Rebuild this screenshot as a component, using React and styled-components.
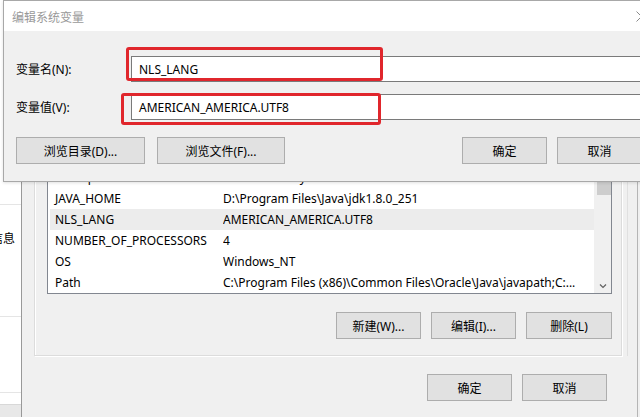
import React from 'react';
import styled, { createGlobalStyle } from 'styled-components';

const GlobalStyle = createGlobalStyle`
  html, body {
    margin: 0;
    padding: 0;
    overflow: hidden;
  }
  body {
    font-family: "Noto Sans", "Noto Sans CJK SC", sans-serif;
    font-size: 12px;
    color: #000;
  }
`;

const Desktop = styled.div`
  position: relative;
  width: 640px;
  height: 417px;
  overflow: hidden;
  background: #f0f0f0;
`;

/* window peeking in at the left edge */
const SideWindow = styled.div`
  position: absolute;
  left: 0;
  top: 0;
  width: 21px;
  height: 417px;
  background: #fff;
  display: flex;
  flex-direction: column;
  overflow: hidden;
`;

const SideBlock = styled.div`
  height: ${(p) => p.h}px;
  flex: none;
  box-sizing: border-box;
  padding-top: ${(p) => p.pt || 0}px;
  border-bottom: 1px solid ${(p) => p.line || '#e5e5e5'};
  background: ${(p) => p.bg || '#fff'};
`;

const SideText = styled.div`
  margin-left: -9px;
  line-height: 16px;
  white-space: nowrap;
  font-family: "Noto Sans CJK SC", sans-serif;
`;

/* environment variables window (behind) */
const EnvWindow = styled.div`
  position: absolute;
  left: 21px;
  top: 0;
  width: 617px;
  height: 417px;
  background: #f0f0f0;
  border-left: 1px solid #999;
  border-right: 1px solid #b5b5b5;
  display: flex;
  flex-direction: column;
  padding: 0 30px 0 12px;
  box-sizing: border-box;
`;

const GroupFrame = styled.div`
  margin-top: 100px;
  width: 594px;
  border-right: 1px solid #e0e0e0;
  box-sizing: border-box;
`;

const Group = styled.div`
  width: 588px;
  box-sizing: border-box;
  border: 1px solid #dcdcdc;
  box-shadow: inset 1px 1px 0 #fff, 1px 1px 0 #fff;
  padding: 65px 9px 16px 12px;
  display: flex;
  flex-direction: column;
`;

const List = styled.div`
  height: 128px;
  box-sizing: border-box;
  border: 1px solid #828790;
  background: #fff;
  display: flex;
  overflow: hidden;
`;

const Rows = styled.div`
  flex: 1;
  display: flex;
  flex-direction: column;
`;

const Row = styled.div`
  height: 21px;
  flex: none;
  margin-left: 2px;
  padding-left: 5px;
  display: flex;
  align-items: center;
  white-space: nowrap;
  background: ${(p) => (p.selected ? '#ececec' : 'transparent')};
`;

const NameCell = styled.span`
  width: 168px;
  flex: none;
`;

const ValueCell = styled.span`
  flex: 1;
  overflow: hidden;
`;

const ScrollBar = styled.div`
  width: 17px;
  flex: none;
  background: #f0f0f0;
  display: flex;
  flex-direction: column;
  align-items: center;
  padding: 13px 0 4px;
  box-sizing: border-box;
`;

const Thumb = styled.div`
  width: 14px;
  height: 15px;
  margin-left: 2px;
  background: #cdcdcd;
`;

const Spacer = styled.div`
  flex: 1;
`;

const ButtonRow = styled.div`
  display: flex;
  justify-content: flex-end;
  gap: ${(p) => p.gap || 10}px;
  margin-top: ${(p) => p.mt || 0}px;
`;

const Button = styled.button`
  width: ${(p) => p.w || 85}px;
  height: 27px;
  flex: none;
  box-sizing: border-box;
  background: #e1e1e1;
  border: 1px solid #adadad;
  border-radius: 0;
  font-family: "Noto Sans", "Noto Sans CJK SC", sans-serif;
  font-size: 12px;
  color: #000;
  padding: 0;
  display: flex;
  align-items: center;
  justify-content: center;
`;

/* edit dialog (front) */
const EditDialog = styled.div`
  position: absolute;
  left: 3px;
  top: 0;
  width: 662px;
  height: 182px;
  box-sizing: border-box;
  border: 1px solid #a8a8a8;
  background: #f0f0f0;
  display: flex;
  flex-direction: column;
  box-shadow: 0 1px 3px rgba(0, 0, 0, 0.12);
`;

const TitleBar = styled.div`
  height: 30px;
  flex: none;
  background: #fff;
  display: flex;
  align-items: center;
  justify-content: space-between;
  padding-left: 8px;
  color: #999;
  font-family: "Noto Sans CJK SC", sans-serif;
`;

const CloseBox = styled.div`
  width: 46px;
  height: 30px;
  display: flex;
  align-items: center;
  justify-content: center;
`;

const DialogBody = styled.div`
  flex: 1;
  padding: 25px 22px 0 12px;
  display: flex;
  flex-direction: column;
  gap: 12px;
`;

const FieldRow = styled.div`
  display: flex;
  align-items: center;
`;

const Label = styled.label`
  width: 115px;
  flex: none;
`;

const Input = styled.div`
  flex: 1;
  height: 26px;
  box-sizing: border-box;
  border: 1px solid #7a7a7a;
  background: #fff;
  display: flex;
  align-items: center;
  padding-left: 7px;
`;

const Highlight = styled.div`
  position: absolute;
  left: ${(p) => p.x}px;
  top: ${(p) => p.y}px;
  width: ${(p) => p.w}px;
  height: ${(p) => p.h}px;
  box-sizing: border-box;
  border: 3px solid #e0262c;
  border-radius: 3px;
  pointer-events: none;
`;

const rows = [
  ['ComSpec', 'C:\\Windows\\system32\\cmd.exe'],
  ['JAVA_HOME', 'D:\\Program Files\\Java\\jdk1.8.0_251'],
  ['NLS_LANG', 'AMERICAN_AMERICA.UTF8', true],
  ['NUMBER_OF_PROCESSORS', '4'],
  ['OS', 'Windows_NT'],
  ['Path', 'C:\\Program Files (x86)\\Common Files\\Oracle\\Java\\javapath;C:...'],
];

export default function App() {
  return (
    <Desktop>
      <GlobalStyle />
      <SideWindow>
        <SideBlock h={205} />
        <SideBlock h={112} pt={25}>
          <SideText>信息</SideText>
        </SideBlock>
        <SideBlock h={76} />
        <SideBlock h={12} line="#d8d8d8" />
        <SideBlock h={20} bg="#e8e8e8" />
      </SideWindow>

      <EnvWindow>
        <GroupFrame>
          <Group>
            <List>
              <Rows>
                {rows.map(([name, value, selected]) => (
                  <Row key={name} selected={selected}>
                    <NameCell>{name}</NameCell>
                    <ValueCell>{value}</ValueCell>
                  </Row>
                ))}
              </Rows>
              <ScrollBar>
                <Thumb />
                <Spacer />
                <svg width="8" height="6" viewBox="0 0 8 6">
                  <path d="M1 1.5 L4 4.5 L7 1.5" fill="none" stroke="#606060" strokeWidth="1.2" />
                </svg>
              </ScrollBar>
            </List>
            <ButtonRow mt={18}>
              <Button>新建(W)...</Button>
              <Button>编辑(I)...</Button>
              <Button w={86}>删除(L)</Button>
            </ButtonRow>
          </Group>
        </GroupFrame>
        <ButtonRow mt={18}>
          <Button>确定</Button>
          <Button>取消</Button>
        </ButtonRow>
      </EnvWindow>

      <EditDialog>
        <TitleBar>
          <span>编辑系统变量</span>
          <CloseBox>
            <svg width="11" height="11" viewBox="0 0 11 11">
              <path d="M0.5 0.5 L10.5 10.5 M10.5 0.5 L0.5 10.5" stroke="#8a8a8a" strokeWidth="1" />
            </svg>
          </CloseBox>
        </TitleBar>
        <DialogBody>
          <FieldRow>
            <Label>变量名(N):</Label>
            <Input>NLS_LANG</Input>
          </FieldRow>
          <FieldRow>
            <Label>变量值(V):</Label>
            <Input>AMERICAN_AMERICA.UTF8</Input>
          </FieldRow>
          <ButtonRow mt={5}>
            <ButtonRow gap={12}>
              <Button w={129}>浏览目录(D)...</Button>
              <Button w={128}>浏览文件(F)...</Button>
            </ButtonRow>
            <Spacer />
            <ButtonRow>
              <Button>确定</Button>
              <Button>取消</Button>
            </ButtonRow>
          </ButtonRow>
        </DialogBody>
      </EditDialog>

      <Highlight x={126} y={47} w={257} h={34} />
      <Highlight x={121} y={93} w={260} h={32} />
    </Desktop>
  );
}
